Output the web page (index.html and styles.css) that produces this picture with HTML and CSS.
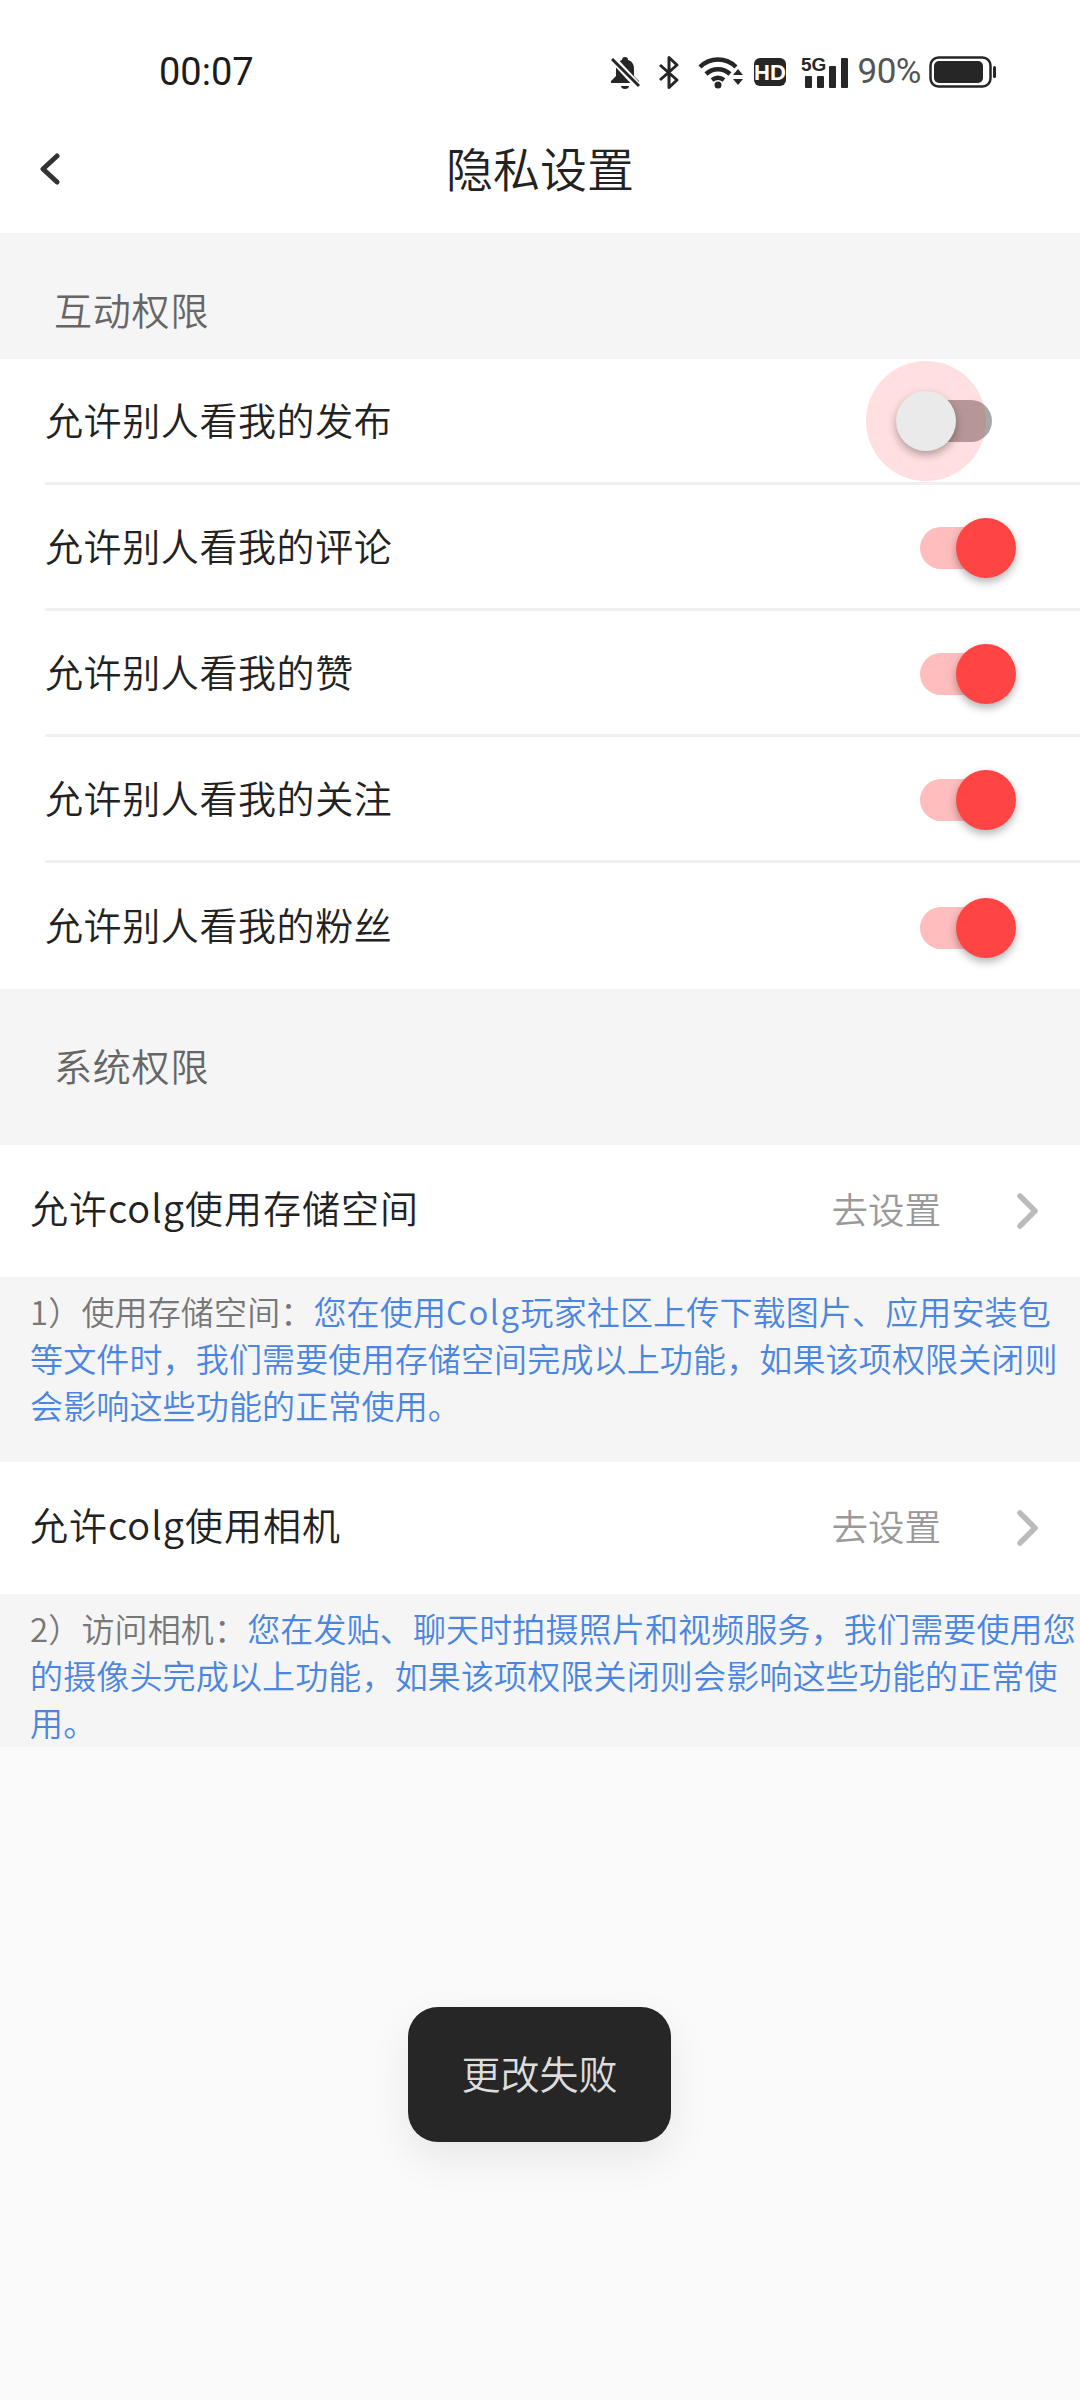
FILE: index.html
```html
<!DOCTYPE html>
<html lang="zh-CN">

<head>
    <meta charset="UTF-8">
    <meta name="viewport" content="width=device-width, initial-scale=1.0">
    <title>隐私设置</title>
    <link rel="stylesheet" href="styles.css">
</head>

<body>
    <div class="statusbar">
        <span class="time">00:07</span>
        <div class="status-icons">
            <svg class="ic-bell" width="30" height="33" viewBox="0 0 30 33">
                <path d="M15 1c2 0 3 1.200 3 3 4 1 6 4.500 6 9v7l5 5v2H1v-2l5-5v-7c0-4.500 2-8 6-9 0-1.800 1-3 3-3z" fill="#262626"/>
                <path d="M11 30h8c0 1.800-1.800 3-4 3s-4-1.200-4-3z" fill="#262626"/>
                <path d="M2 2l26 28" stroke="#fff" stroke-width="7"/>
                <path d="M2 3l27 27" stroke="#262626" stroke-width="3"/>
            </svg>
            <svg class="ic-bt" width="20" height="33" viewBox="0 0 20 33">
                <path d="M1 9l17 15-8 7.500V1.500l8 7.500L1 24" fill="none" stroke="#262626" stroke-width="3" stroke-linejoin="round"/>
            </svg>
            <svg class="ic-wifi" width="45" height="33" viewBox="0 0 45 33">
                <path d="M2 11C12 1 28 1 38 11" fill="none" stroke="#262626" stroke-width="4.500"/>
                <path d="M8 18c7-6.500 17-6.500 24 0" fill="none" stroke="#262626" stroke-width="4.500"/>
                <path d="M14 24c4-3 8-3 12 0" fill="none" stroke="#262626" stroke-width="4.500"/>
                <circle cx="20" cy="29" r="3.500" fill="#262626"/>
                <path d="M35 19l5-6 5 6zM35 23h10l-5 6z" fill="#262626"/>
            </svg>
            <svg class="ic-hd" width="32" height="28" viewBox="0 0 32 28">
                <rect width="32" height="28" rx="6" fill="#262626"/>
                <text x="16" y="22" text-anchor="middle" class="hd-text">HD</text>
            </svg>
            <svg class="ic-signal" width="47" height="33" viewBox="0 0 47 33">
                <text x="0" y="15" class="fiveg-text">5G</text>
                <rect x="4" y="20" width="7" height="12" rx="1" fill="#262626"/>
                <rect x="16" y="20" width="7" height="12" rx="1" fill="#262626"/>
                <rect x="28" y="10" width="7" height="22" rx="1" fill="#262626"/>
                <rect x="40" y="2" width="7" height="30" rx="1" fill="#262626"/>
            </svg>
            <span class="battery-text">90%</span>
            <svg class="ic-battery" width="68" height="32" viewBox="0 0 68 32">
                <rect x="1.500" y="1.500" width="60" height="29" rx="8" fill="none" stroke="#262626" stroke-width="2.500"/>
                <rect x="5" y="5" width="49" height="22" rx="5" fill="#262626"/>
                <rect x="64" y="10" width="3" height="12" rx="1.500" fill="#262626"/>
            </svg>
        </div>
    </div>

    <div class="navbar">
        <svg class="back" width="20" height="32" viewBox="0 0 20 32">
            <path d="M17 3L3 16l14 13" fill="none" stroke="#333" stroke-width="5" stroke-linecap="round" stroke-linejoin="round"/>
        </svg>
        <h1>隐私设置</h1>
    </div>

    <div class="section-title">互动权限</div>
    <div class="list">
        <div class="row">
            <span>允许别人看我的发布</span>
            <div class="switch off"><div class="halo"></div><div class="thumb"></div></div>
        </div>
        <div class="row">
            <span>允许别人看我的评论</span>
            <div class="switch"><div class="thumb"></div></div>
        </div>
        <div class="row">
            <span>允许别人看我的赞</span>
            <div class="switch"><div class="thumb"></div></div>
        </div>
        <div class="row">
            <span>允许别人看我的关注</span>
            <div class="switch"><div class="thumb"></div></div>
        </div>
        <div class="row">
            <span>允许别人看我的粉丝</span>
            <div class="switch"><div class="thumb"></div></div>
        </div>
    </div>

    <div class="section-title">系统权限</div>
    <div class="perm">
        <span class="perm-name">允许colg使用存储空间</span>
        <span class="perm-go">去设置</span>
        <svg class="chevron" width="24" height="36" viewBox="0 0 24 36">
            <path d="M4 3l15 15L4 33" fill="none" stroke="#bbb" stroke-width="5.500" stroke-linecap="round" stroke-linejoin="round"/>
        </svg>
    </div>
    <p class="note">1）使用存储空间：<span class="link">您在使用<span class="latin">Colg</span>玩家社区上传下载图片、应用安装包等文件时，我们需要使用存储空间完成以上功能，如果该项权限关闭则会影响这些功能的正常使用。</span></p>
    <div class="perm">
        <span class="perm-name">允许colg使用相机</span>
        <span class="perm-go">去设置</span>
        <svg class="chevron" width="24" height="36" viewBox="0 0 24 36">
            <path d="M4 3l15 15L4 33" fill="none" stroke="#bbb" stroke-width="5.500" stroke-linecap="round" stroke-linejoin="round"/>
        </svg>
    </div>
    <p class="note last">2）访问相机：<span class="link">您在发贴、聊天时拍摄照片和视频服务，我们需要使用您的摄像头完成以上功能，如果该项权限关闭则会影响这些功能的正常使用。</span></p>

    <div class="toast">更改失败</div>
</body>

</html>
```

FILE: styles.css
```css
* {
    box-sizing: border-box;
}

html,
body {
    height: 100%;
}

body {
    position: relative;
    margin: 0;
    overflow: hidden;
    font-family: "Noto Sans CJK SC", "Noto Sans", sans-serif;
    font-weight: 350;
    background-color: #fafafa;
    color: #222;
}

.statusbar {
    display: flex;
    justify-content: space-between;
    align-items: center;
    height: 104px;
    padding: 40px 83px 0 159px;
    background-color: #fff;
}

.time {
    font-family: Roboto, sans-serif;
    font-size: 38px;
    font-weight: 400;
    color: #1c1c1c;
}

.status-icons {
    display: flex;
    align-items: center;
}

.ic-bt {
    margin-left: 19px;
}

.ic-wifi {
    margin-left: 19px;
}

.ic-hd {
    margin-left: 11px;
}

.ic-signal {
    margin-left: 15px;
}

.hd-text {
    font-family: "Liberation Sans", sans-serif;
    font-size: 22px;
    font-weight: 700;
    fill: #fff;
}

.fiveg-text {
    font-family: "Liberation Sans", sans-serif;
    font-size: 19px;
    font-weight: 700;
    fill: #262626;
}

.battery-text {
    margin-left: 10px;
    font-family: Roboto, sans-serif;
    font-size: 35px;
    font-weight: 400;
    letter-spacing: -0.5px;
    line-height: 40px;
    color: #555;
}

.ic-battery {
    margin-left: 8px;
}

.navbar {
    display: flex;
    justify-content: center;
    align-items: center;
    position: relative;
    height: 129px;
    padding-bottom: 5px;
    background-color: #fff;
}

.navbar h1 {
    margin: 0;
    font-size: 47px;
    font-weight: 350;
    color: #222;
}

.back {
    position: absolute;
    left: 40px;
    top: 49px;
}

.section-title {
    height: 126px;
    padding: 56px 0 0 54px;
    font-size: 38px;
    letter-spacing: 0.8px;
    line-height: 40px;
    color: #666;
    background-color: #f5f5f5;
}

.list + .section-title {
    height: 156px;
}

.list {
    background-color: #fff;
}

.row {
    display: flex;
    justify-content: space-between;
    align-items: center;
    height: 126px;
    margin-left: 45px;
    padding-right: 88px;
    font-size: 38px;
    letter-spacing: 0.6px;
    border-bottom: 3px solid #f0f0f0;
}

.row span {
    margin-bottom: 5px;
}

.row:last-child {
    border-bottom: none;
}

.switch {
    position: relative;
    width: 72px;
    height: 42px;
    margin-top: 3px;
    border-radius: 21px;
    background-color: #ffbdbd;
}

.thumb {
    position: absolute;
    top: -9px;
    right: -24px;
    width: 60px;
    height: 60px;
    border-radius: 50%;
    background-color: #ff4444;
    box-shadow: 0 4px 8px rgba(0, 0, 0, 0.3);
}

.switch.off {
    margin-top: 0;
    background-color: #a8a8a8;
}

.switch.off .thumb {
    right: auto;
    left: -24px;
    background-color: #eaeaea;
}

.halo {
    position: absolute;
    top: -39px;
    left: -54px;
    width: 120px;
    height: 120px;
    border-radius: 50%;
    background-color: rgba(255, 68, 68, 0.17);
}

.perm {
    display: flex;
    align-items: center;
    height: 132px;
    padding: 0 40px 0 30px;
    background-color: #fff;
}

.perm-name {
    flex: 1;
    margin-bottom: 9px;
    font-size: 38px;
    letter-spacing: 1px;
}

.perm-go {
    margin-right: 75px;
    margin-bottom: 6px;
    font-size: 36.5px;
    color: #999;
}

.note {
    margin: 0;
    padding: 11px 20px 33px 30px;
    font-size: 33px;
    letter-spacing: 0.15px;
    line-height: 47px;
    color: #777;
    background-color: #f5f5f5;
}

.note.last {
    padding: 11px 0 1px 30px;
}

.link {
    color: #4a86e0;
}

.latin {
    letter-spacing: 1.5px;
}

.toast {
    position: absolute;
    left: 408px;
    top: 2007px;
    width: 263px;
    height: 135px;
    border-radius: 30px;
    font-size: 39px;
    line-height: 130px;
    text-align: center;
    color: #ddd;
    background-color: #262626;
    box-shadow: 0 16px 40px rgba(0, 0, 0, 0.08);
}
```
